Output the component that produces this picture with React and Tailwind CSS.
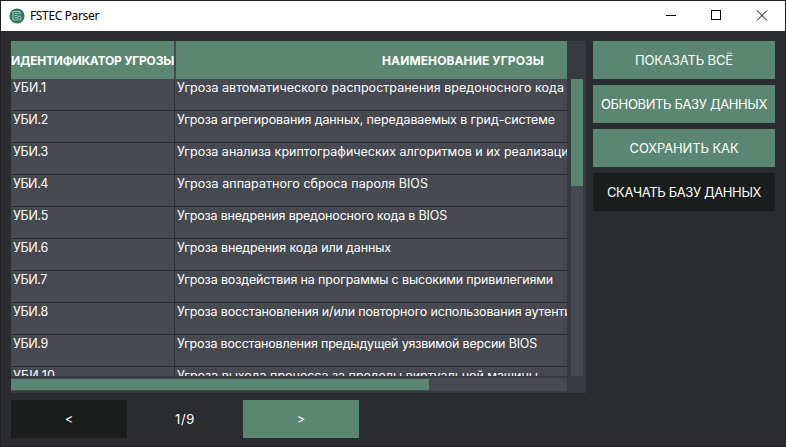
import { useLayoutEffect, useRef, useState } from "react";

// Text whose tracking is adjusted so that it occupies the given width.
function FitText({ width, className = "", children }) {
  const ref = useRef(null);
  const [spacing, setSpacing] = useState(0);
  useLayoutEffect(() => {
    const natural = ref.current.getBoundingClientRect().width;
    setSpacing((width - natural) / children.length);
  }, []);
  return (
    <span ref={ref} className={"inline-block whitespace-pre " + className} style={{ letterSpacing: spacing + "px" }}>
      {children}
    </span>
  );
}

const rows = [
  ["УБИ.1", 33, "Угроза автоматического распространения вредоносного кода", 387],
  ["УБИ.2", 35, "Угроза агрегирования данных, передаваемых в грид-системе", 378],
  ["УБИ.3", 35, "Угроза анализа криптографических алгоритмов и их реализации", 399],
  ["УБИ.4", 35, "Угроза аппаратного сброса пароля BIOS", 251],
  ["УБИ.5", 35, "Угроза внедрения вредоносного кода в BIOS", 270],
  ["УБИ.6", 35, "Угроза внедрения кода или данных", 214],
  ["УБИ.7", 34, "Угроза воздействия на программы с высокими привилегиями", 376],
  ["УБИ.8", 35, "Угроза восстановления и/или повторного использования аутентиф", 403],
  ["УБИ.9", 35, "Угроза восстановления предыдущей уязвимой версии BIOS", 360],
  ["УБИ.10", 42, "Угроза выхода процесса за пределы виртуальной машины", 361],
];

const actions = [
  ["ПОКАЗАТЬ ВСЁ", 98, false],
  ["ОБНОВИТЬ БАЗУ ДАННЫХ", 166, false],
  ["СОХРАНИТЬ КАК", 109, false],
  ["СКАЧАТЬ БАЗУ ДАННЫХ", 154, true],
];

function Logo() {
  return (
    <svg width="16" height="16" viewBox="0 0 16 16" fill="none">
      <circle cx="8" cy="8" r="7.6" fill="#2f7663" />
      <path d="M4 3.5h7v4M4 3.5v8.5h5M5.5 5.5h4M5.5 7.5h3M5.5 9.5h2.5" stroke="#a9cbbd" />
      <circle cx="10.3" cy="9.8" r="1.7" stroke="#a9cbbd" />
      <path d="M11.5 11.2l1.3 1.3" stroke="#a9cbbd" />
    </svg>
  );
}

export default function App() {
  return (
    <div className="h-[447px] w-[786px] overflow-hidden border border-[#222023] bg-[#2b2c2f] font-['Inter','Noto_Sans',sans-serif] text-white">
      <header className="flex h-[30px] items-center bg-white pl-2 text-black">
        <Logo />
        <div className="ml-[5px] flex-1 font-['Noto_Sans',sans-serif] text-[12px] leading-[30px]">
          <FitText width={69}>FSTEC Parser</FitText>
        </div>
        <svg width="138" height="30" viewBox="0 0 138 30" fill="none" stroke="#000" shapeRendering="crispEdges">
          <path d="M19 14.5h10" />
          <rect x="64.500" y="9.500" width="9" height="9" />
          <path d="M110 9.500l10 10M120 9.500l-10 10" shapeRendering="auto" />
        </svg>
      </header>

      <div className="flex gap-[7px] pl-[10px] pt-[10px]">
        <section className="h-[352px] w-[575px] bg-[#373a41]">
          <div className="flex h-[335px]">
            <div className="w-[556px] overflow-hidden bg-[#46494f]">
              <div className="flex h-[38px] gap-[2px] text-[12px] font-bold leading-[39px]">
                <div className="w-[163px] shrink-0 bg-[#5b8772]">
                  <FitText width={163}>ИДЕНТИФИКАТОР УГРОЗЫ</FitText>
                </div>
                <div className="flex-1 bg-[#5b8772] pl-[206px]">
                  <FitText width={162}>НАИМЕНОВАНИЕ УГРОЗЫ</FitText>
                </div>
              </div>
              {rows.map(([id, idWidth, name, nameWidth]) => (
                <div key={id} className="flex h-8 border-b border-[#2b2c2f] text-[12.5px] leading-[18px]">
                  <div className="w-[164px] shrink-0 border-r border-[#2b2c2f] pl-[2px]">
                    <FitText width={idWidth}>{id}</FitText>
                  </div>
                  <div className="w-[392px] shrink-0 overflow-hidden whitespace-nowrap pl-[2px]">
                    <FitText width={nameWidth}>{name}</FitText>
                  </div>
                </div>
              ))}
            </div>
            <div className="ml-1 mt-[38px] w-3 bg-[#46494f]">
              <div className="h-[107px] bg-[#5b8772]" />
            </div>
          </div>
          <div className="mt-[2px] h-[13px] w-[556px] border-y border-[#44494d] bg-[#46494f]">
            <div className="h-[11px] w-[418px] bg-[#5b8772]" />
          </div>
        </section>

        <aside className="flex w-[182px] flex-col gap-[6px]">
          {actions.map(([label, width, dark]) => (
            <button
              key={label}
              className={"h-[38px] text-center text-[13px] leading-[39px] " + (dark ? "bg-[#191d1b]" : "bg-[#5b8772]")}
            >
              <FitText width={width}>{label}</FitText>
            </button>
          ))}
        </aside>
      </div>

      <footer className="flex pl-[10px] pt-[7px] text-center text-[13px] leading-[38px]">
        <button className="h-[38px] w-[116px] bg-[#191d1b]">&lt;</button>
        <div className="w-[116px]">
          <FitText width={20}>1/9</FitText>
        </div>
        <button className="h-[38px] w-[116px] bg-[#5b8772]">&gt;</button>
      </footer>
    </div>
  );
}
